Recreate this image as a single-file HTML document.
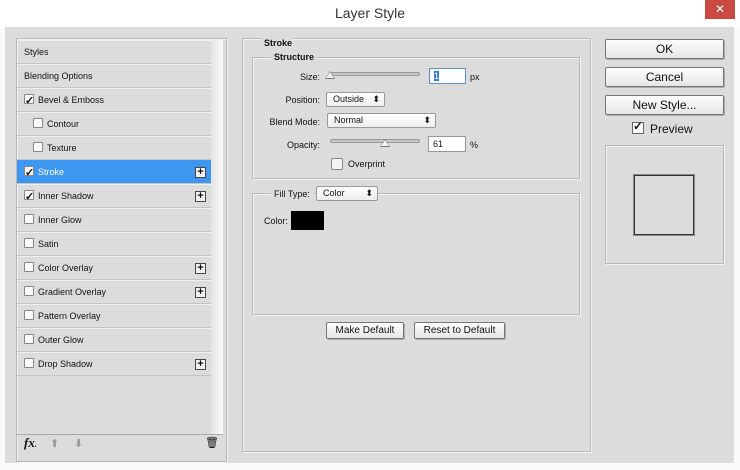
<!DOCTYPE html>
<html><head><style>
*{margin:0;padding:0;box-sizing:border-box}
body{width:740px;height:470px;background:#fafafa;font-family:"Liberation Sans",sans-serif;font-size:9px;color:#111;position:relative;overflow:hidden}
.a{position:absolute}
.dlg{left:5px;top:27px;width:729px;height:436px;background:#dcdcdc}
.box{border:1px solid #b8b8b8;box-shadow:inset 1px 1px 0 #f2f2f2,1px 1px 0 #f2f2f2}
.row{position:absolute;left:17px;width:194px;height:24px;border-bottom:1px solid #c4c4c4;border-top:1px solid #f0f0f0;line-height:22px;padding-left:7px}
.cb{display:inline-block;width:10px;height:10px;border:1px solid #888;background:#fafafa;vertical-align:-1px;margin-right:4px;position:relative;border-radius:1px}
.cb.k::after{content:"✓";position:absolute;left:0px;top:-5px;font-size:11px;font-weight:bold;color:#111}
.plus{position:absolute;right:5px;top:6px;width:11px;height:11px;border:1px solid #444;background:#f4f4f4;font-size:11px;line-height:8px;text-align:center;font-weight:bold}
.btn{position:absolute;border:1px solid #777;border-radius:2px;background:linear-gradient(#fdfdfd,#e6e6e6);text-align:center;font-size:12px;box-shadow:1px 1px 0 #aaa}
.sel{position:absolute;height:15px;border:1px solid #999;background:linear-gradient(#fff,#eee);border-radius:2px;padding-left:6px;line-height:13px}
.sel::after{content:"⬍";position:absolute;right:4px;top:0;font-size:9px}
.inp{position:absolute;height:16px;border:1px solid #999;background:#fff;line-height:14px;padding-left:4px}
.lbl{position:absolute;text-align:right;width:90px}
.sl{position:absolute;height:4px;border:1px solid #999;background:#c8c8c8;border-radius:2px}
.th{position:absolute;width:0;height:0;border-left:5px solid transparent;border-right:5px solid transparent;border-bottom:8px solid #777}
.th::after{content:"";position:absolute;left:-4px;top:1px;border-left:4px solid transparent;border-right:4px solid transparent;border-bottom:6px solid #f4f4f4}
</style></head><body>
<div class="a" style="left:0;top:0;width:740px;height:27px;background:#fff"></div>
<div class="a" style="left:0;top:5px;width:740px;text-align:center;font-size:14px;color:#333">Layer Style</div>
<div class="a" style="left:705px;top:0;width:30px;height:19px;background:#c94a42;color:#fff;text-align:center;font-size:12px;line-height:19px">✕</div>
<div class="a dlg"></div>
<div class="a box" style="left:16px;top:38px;width:211px;height:424px;background:#dcdcdc"></div>
<div class="a" style="left:211px;top:40px;width:12px;height:394px;background:linear-gradient(90deg,#e4e4e4,#fafafa)"></div>
<div class="row" style="top:40px">Styles</div>
<div class="row" style="top:64px">Blending Options</div>
<div class="row" style="top:88px"><span class="cb k"></span>Bevel &amp; Emboss</div>
<div class="row" style="top:112px;padding-left:16px"><span class="cb"></span>Contour</div>
<div class="row" style="top:136px;padding-left:16px"><span class="cb"></span>Texture</div>
<div class="row" style="top:160px;background:#3d97f0;color:#fff;border-top-color:#3d97f0"><span class="cb k"></span>Stroke<span class="plus" style="color:#111">+</span></div>
<div class="row" style="top:184px"><span class="cb k"></span>Inner Shadow<span class="plus">+</span></div>
<div class="row" style="top:208px"><span class="cb"></span>Inner Glow</div>
<div class="row" style="top:232px"><span class="cb"></span>Satin</div>
<div class="row" style="top:256px"><span class="cb"></span>Color Overlay<span class="plus">+</span></div>
<div class="row" style="top:280px"><span class="cb"></span>Gradient Overlay<span class="plus">+</span></div>
<div class="row" style="top:304px"><span class="cb"></span>Pattern Overlay</div>
<div class="row" style="top:328px"><span class="cb"></span>Outer Glow</div>
<div class="row" style="top:352px"><span class="cb"></span>Drop Shadow<span class="plus">+</span></div>
<div class="a" style="left:17px;top:434px;width:206px;height:1px;background:#aaa"></div>
<div class="a" style="left:24px;top:435px;font-size:13px;font-style:italic;font-weight:bold;font-family:'Liberation Serif',serif">fx<span style="font-size:8px">.</span></div>
<div class="a" style="left:50px;top:437px;font-size:11px;color:#999">⬆</div>
<div class="a" style="left:74px;top:437px;font-size:11px;color:#999">⬇</div>
<div class="a" style="left:205px;top:436px;font-size:11px">🗑</div>

<div class="a box" style="left:242px;top:38px;width:349px;height:414px"></div>
<div class="a" style="left:262px;top:38px;font-weight:bold;background:#dcdcdc;padding:0 2px">Stroke</div>
<div class="a box" style="left:252px;top:57px;width:328px;height:122px"></div>
<div class="a" style="left:271px;top:52px;font-weight:bold;background:#dcdcdc;padding:0 3px">Structure</div>
<div class="lbl" style="left:230px;top:72px">Size:</div>
<div class="sl" style="left:330px;top:72px;width:90px"></div><div class="th" style="left:325px;top:71px"></div>
<div class="inp" style="left:429px;top:68px;width:37px;border-color:#5a8fd0"><span style="background:#3a7ad0;color:#fff">1</span></div>
<div class="a" style="left:470px;top:72px">px</div>
<div class="lbl" style="left:230px;top:95px">Position:</div>
<div class="sel" style="left:326px;top:92px;width:59px">Outside</div>
<div class="lbl" style="left:230px;top:117px">Blend Mode:</div>
<div class="sel" style="left:327px;top:113px;width:109px">Normal</div>
<div class="lbl" style="left:230px;top:140px">Opacity:</div>
<div class="sl" style="left:330px;top:139px;width:90px"></div><div class="th" style="left:380px;top:139px"></div>
<div class="inp" style="left:428px;top:136px;width:38px">61</div>
<div class="a" style="left:470px;top:140px">%</div>
<div class="a" style="left:331px;top:158px;width:12px;height:12px;border:1px solid #888;background:#f4f4f4;border-radius:2px"></div>
<div class="a" style="left:348px;top:159px">Overprint</div>
<div class="a box" style="left:252px;top:193px;width:328px;height:122px"></div>
<div class="a" style="left:271px;top:189px;background:#dcdcdc;padding:0 4px 0 3px">Fill Type:</div>
<div class="sel" style="left:316px;top:186px;width:62px">Color</div>
<div class="a" style="left:264px;top:216px">Color:</div>
<div class="a" style="left:291px;top:211px;width:33px;height:19px;background:#000"></div>
<div class="btn" style="left:326px;top:322px;width:78px;height:17px;font-size:10px;line-height:15px">Make Default</div>
<div class="btn" style="left:414px;top:322px;width:91px;height:17px;font-size:10px;line-height:15px">Reset to Default</div>

<div class="btn" style="left:605px;top:39px;width:119px;height:20px;line-height:18px">OK</div>
<div class="btn" style="left:605px;top:67px;width:119px;height:20px;line-height:18px">Cancel</div>
<div class="btn" style="left:605px;top:95px;width:119px;height:20px;line-height:18px">New Style...</div>
<div class="a" style="left:632px;top:122px;width:12px;height:12px;border:1px solid #666;background:#fafafa"></div>
<div class="a" style="left:633px;top:119px;font-size:12px;font-weight:bold">✓</div>
<div class="a" style="left:650px;top:122px;font-size:12px">Preview</div>
<div class="a box" style="left:605px;top:145px;width:119px;height:119px"></div>
<div class="a" style="left:634px;top:175px;width:60px;height:60px;border:1px solid #333;box-shadow:0 0 0 1px #888;background:#dcdcdc"></div>
</body></html>
